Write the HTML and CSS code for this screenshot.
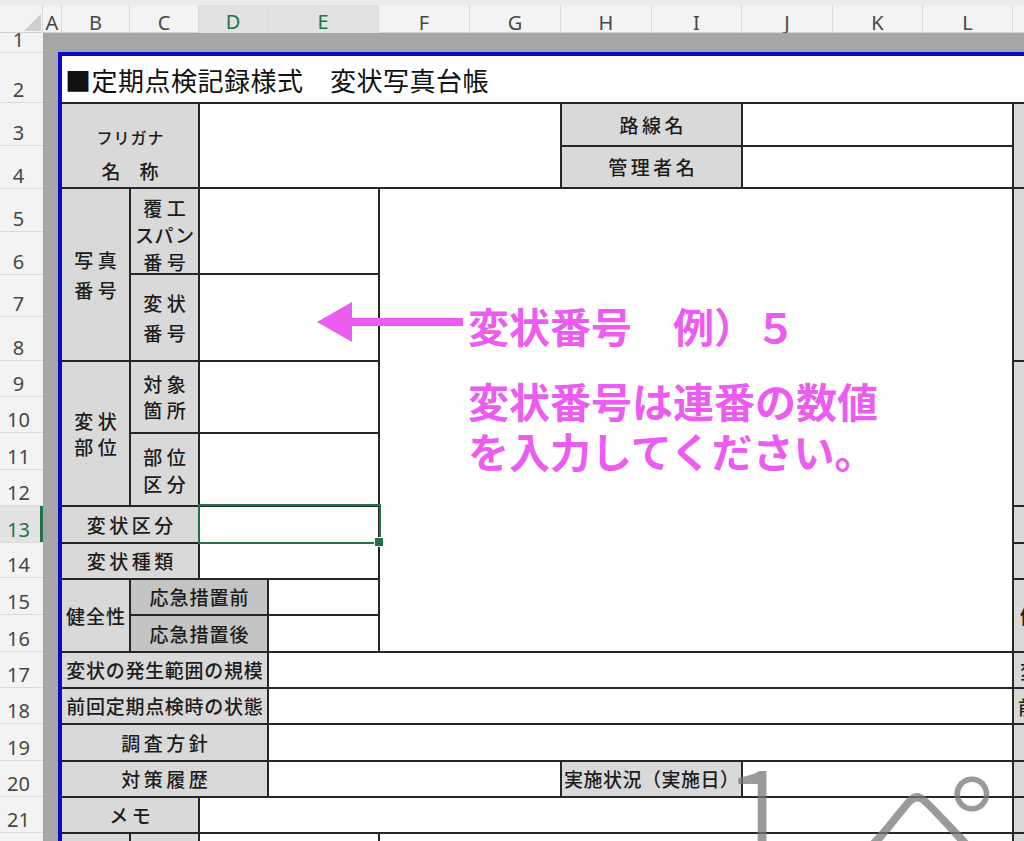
FILE: index.html
```html
<!DOCTYPE html>
<html lang="ja">
<head>
<meta charset="utf-8">
<title>変状写真台帳</title>
<link rel="stylesheet" href="styles.css">
</head>
<body>
<div class="app">
  <div class="topstrip"></div>
  <div class="colhdr">
    <div class="corner"><svg width="43" height="28" viewBox="0 0 43 28"><polygon points="41,9 41,26 24,26" fill="#cfcfcf"/></svg></div>
    <div class="ch">A</div>
    <div class="ch">B</div>
    <div class="ch">C</div>
    <div class="ch on">D</div>
    <div class="ch on">E</div>
    <div class="ch">F</div>
    <div class="ch">G</div>
    <div class="ch">H</div>
    <div class="ch">I</div>
    <div class="ch">J</div>
    <div class="ch">K</div>
    <div class="ch">L</div>
    <div class="ch last"></div>
  </div>
  <div class="main">
    <div class="rowhdr">
      <div class="rh h20">1</div>
      <div class="rh h50">2</div>
      <div class="rh h43">3</div>
      <div class="rh h43">4</div>
      <div class="rh h43">5</div>
      <div class="rh h43">6</div>
      <div class="rh h42">7</div>
      <div class="rh h44">8</div>
      <div class="rh h36">9</div>
      <div class="rh h36">10</div>
      <div class="rh h37">11</div>
      <div class="rh h36">12</div>
      <div class="rh h37 on">13</div>
      <div class="rh h35">14</div>
      <div class="rh h37">15</div>
      <div class="rh h37">16</div>
      <div class="rh h36">17</div>
      <div class="rh h36">18</div>
      <div class="rh h37">19</div>
      <div class="rh h36">20</div>
      <div class="rh h36">21</div>
      <div class="rh h36">22</div>
    </div>
    <div class="sheet">
      <div class="band"></div>
      <div class="print">
        <div class="tbl">
          <div class="title cAll r2">■定期点検記録様式　変状写真台帳</div>

          <div class="lb cBC r3_4 furi"><span class="kana">フリガナ</span><span>名　称</span></div>
          <div class="wh cDG r3_4"></div>
          <div class="lb cHI r3 s3"><span>路線名</span></div>
          <div class="lb cHI r4 s3"><span>管理者名</span></div>
          <div class="wh cJL r3"></div>
          <div class="wh cJL r4"></div>
          <div class="mg cM r3_4"></div>

          <div class="lb cB r5_8 s4 lh30"><span>写真</span><span>番号</span></div>
          <div class="lb cC r5_6 s4 lh27 down"><span>覆工</span><span class="s0">スパン</span><span>番号</span></div>
          <div class="wh cDE r5_6"></div>
          <div class="lb cC r7_8 s4 lh30"><span>変状</span><span>番号</span></div>
          <div class="wh cDE r7_8"></div>
          <div class="wh cFL r5_16"></div>
          <div class="mg cM r5_8"></div>

          <div class="lb cB r9_12 s4"><span>変状</span><span>部位</span></div>
          <div class="lb cC r9_10 s4"><span>対象</span><span>箇所</span></div>
          <div class="wh cDE r9_10"></div>
          <div class="lb cC r11_12 s4 lh27"><span>部位</span><span>区分</span></div>
          <div class="wh cDE r11_12"></div>
          <div class="mg cM r9_12"></div>

          <div class="lb cBC r13 s3"><span>変状区分</span></div>
          <div class="wh cDE r13 sel"></div>
          <div class="mg cM r13"></div>

          <div class="lb cBC r14 s3"><span>変状種類</span></div>
          <div class="wh cDE r14"></div>
          <div class="mg cM r14"></div>

          <div class="lb cB r15_16 s1"><span>健全性</span></div>
          <div class="lb dk cCD r15 s1"><span>応急措置前</span></div>
          <div class="wh cE r15"></div>
          <div class="lb dk cCD r16 s1"><span>応急措置後</span></div>
          <div class="wh cE r16"></div>
          <div class="mg cM r15_16 clip"><span>健全性</span></div>

          <div class="lb cBD r17 s07"><span>変状の発生範囲の規模</span></div>
          <div class="wh cEL r17"></div>
          <div class="mg cM r17 clip"><span>変状の発生範囲の規模</span></div>

          <div class="lb cBD r18 s07"><span>前回定期点検時の状態</span></div>
          <div class="wh cEL r18"></div>
          <div class="mg cM r18 clip tight"><span>前回定期点検時の状態</span></div>

          <div class="lb cBD r19 s3"><span>調査方針</span></div>
          <div class="wh cEL r19"></div>
          <div class="mg cM r19"></div>

          <div class="lb cBD r20 s3"><span>対策履歴</span></div>
          <div class="wh cEG r20"></div>
          <div class="lb cHI r20 s05"><span>実施状況（実施日）</span></div>
          <div class="wh cJL r20"></div>
          <div class="mg cM r20"></div>

          <div class="lb cBC r21 s3"><span>メモ</span></div>
          <div class="wh cDL r21"></div>
          <div class="mg cM r21"></div>

          <div class="lb cB r22"></div>
          <div class="lb cC r22"></div>
          <div class="wh cDE r22"></div>
          <div class="wh cFL r22"></div>
          <div class="mg cM r22"></div>
        </div>
      </div>
    </div>
  </div>

  <svg class="arrow" width="160" height="60" viewBox="0 0 160 60">
    <polygon points="7,28 42,8 42,48" fill="#ec5cf1"/>
    <rect x="40" y="24" width="113" height="8" fill="#ec5cf1"/>
  </svg>
  <div class="note">
    <div class="l1">変状番号　例）５</div>
    <div class="l2">変状番号は連番の数値</div>
    <div>を入力してください。</div>
  </div>

  <div class="wm one">1</div>
  <div class="wm pe">ペ</div>
</div>
</body>
</html>
```
FILE: styles.css
```css
* { box-sizing: border-box; margin: 0; padding: 0; }
body { margin: 0; background: #fff; font-family: "Noto Sans CJK JP", "Noto Sans", sans-serif; }

.app { position: relative; width: 1024px; height: 841px; overflow: hidden; background: #fff; }
.topstrip { height: 5px; background: #e9ebee; }

.colhdr {
  display: grid;
  grid-template-columns: 43px 19px 68px 69px 69px 111px 91px 91px 91px 90px 91px 90px 90px 1fr;
  height: 28px;
  background: #f3f3f3;
  border-bottom: 1px solid #d2d2d2;
}
.corner { border-right: 1px solid #dadada; }
.corner svg { display: block; }
.ch {
  border-right: 1px solid #dadada;
  display: flex; justify-content: center; align-items: center;
  padding-top: 3px;
  font: 20px "Noto Sans", "Liberation Sans", sans-serif;
  color: #474747;
}
.ch.last { border-right: none; }
.ch.on { background: #e2e2e2; color: #217346; border-bottom: 2px solid #217346; }

.main { display: flex; height: 808px; }
.rowhdr { width: 43px; flex: none; background: #f3f3f3; }
.rh {
  display: flex; align-items: flex-end; justify-content: center;
  padding-right: 6px;
  border-bottom: 1px solid #dadada;
  font: 20px/24px "Noto Sans", "Liberation Sans", sans-serif;
  color: #474747;
}
.rh.on { background: #e2e2e2; color: #217346; box-shadow: inset -3px 0 0 #217346; }
.h20 { height: 20px; }
.h35 { height: 35px; }
.h36 { height: 36px; }
.h37 { height: 37px; }
.h42 { height: 42px; }
.h43 { height: 43px; }
.h44 { height: 44px; }
.h50 { height: 50px; }

.sheet { flex: 1; background: #a6a6a6; overflow: hidden; }
.band { height: 19px; }
.print { margin-left: 15px; border-top: 4px solid #0a0acb; border-left: 4px solid #0a0acb; }

.tbl {
  display: grid;
  grid-template-columns: 67px 67px 67px 109px 89px 89px 89px 88px 89px 88px 88px 120px;
  grid-template-rows: 46px 41px 40px 41px 41px 41px 42px 34px 34px 34px 35px 35px 34px 34px 35px 34px 34px 35px 34px 34px 36px;
  gap: 2px;
  background: #262626;
}

.title {
  background: #fff;
  display: flex; align-items: center;
  padding-left: 3px;
  font-size: 26px; letter-spacing: 0.5px;
  color: #111;
}

.lb {
  background: #d9d9d9;
  display: flex; flex-direction: column; align-items: center; justify-content: center;
  font-size: 19px; line-height: 26px; font-weight: 500;
  color: #1c1c1c; white-space: nowrap; text-align: center;
}
.lb.dk { background: #c4c4c4; }
.wh { background: #fff; }
.mg { background: #d9d9d9; }

.s0 { letter-spacing: 0; margin-left: 0; }
.s05 span { letter-spacing: 0.5px; padding-left: 0.5px; }
.s07 span { letter-spacing: 0.7px; padding-left: 0.7px; }
.s1 span { letter-spacing: 1px; padding-left: 1px; }
.s3 span { letter-spacing: 3.5px; padding-left: 3.5px; }
.s4 span { letter-spacing: 4.5px; padding-left: 4.5px; }
.s4 span.s0 { letter-spacing: 0.5px; padding-left: 0.5px; }
.lh27 { line-height: 27px; }
.lh30 { line-height: 30px; }
.down { padding-top: 6px; }

.furi { line-height: 33px; padding-top: 17px; }
.furi .kana { font-size: 16px; letter-spacing: 1px; padding-left: 1px; }

.clip {
  display: flex; align-items: center;
  padding-left: 6px; overflow: hidden; white-space: nowrap;
  font-size: 19px; font-weight: 500; color: #1c1c1c; letter-spacing: 0.7px;
}
.clip.tight { padding-left: 4px; }

.sel { position: relative; z-index: 2; }
.sel::after {
  content: ""; position: absolute;
  top: -3px; left: -2px; right: -3px; bottom: -2px;
  border: 2px solid #217346;
}
.sel::before {
  content: ""; position: absolute; z-index: 3;
  right: -6px; bottom: -5px; width: 8px; height: 8px;
  background: #217346; border: 1px solid #fff;
}

/* grid placement */
.cAll { grid-column: 1 / 13; }
.cB { grid-column: 1; }
.cC { grid-column: 2; }
.cBC { grid-column: 1 / 3; }
.cBD { grid-column: 1 / 4; }
.cCD { grid-column: 2 / 4; }
.cDE { grid-column: 3 / 5; }
.cDG { grid-column: 3 / 7; }
.cDL { grid-column: 3 / 12; }
.cE { grid-column: 4; }
.cEG { grid-column: 4 / 7; }
.cEL { grid-column: 4 / 12; }
.cFL { grid-column: 5 / 12; }
.cHI { grid-column: 7 / 9; }
.cJL { grid-column: 9 / 12; }
.cM { grid-column: 12; }

.r2 { grid-row: 1; }
.r3 { grid-row: 2; }
.r4 { grid-row: 3; }
.r3_4 { grid-row: 2 / 4; }
.r5_6 { grid-row: 4 / 6; }
.r5_8 { grid-row: 4 / 8; }
.r5_16 { grid-row: 4 / 16; }
.r7_8 { grid-row: 6 / 8; }
.r9_10 { grid-row: 8 / 10; }
.r9_12 { grid-row: 8 / 12; }
.r11_12 { grid-row: 10 / 12; }
.r13 { grid-row: 12; }
.r14 { grid-row: 13; }
.r15 { grid-row: 14; }
.r16 { grid-row: 15; }
.r15_16 { grid-row: 14 / 16; }
.r17 { grid-row: 16; }
.r18 { grid-row: 17; }
.r19 { grid-row: 18; }
.r20 { grid-row: 19; }
.r21 { grid-row: 20; }
.r22 { grid-row: 21; }

/* annotation overlay */
.arrow { position: absolute; left: 310px; top: 294px; z-index: 5; }
.note {
  position: absolute; left: 468px; top: 302px; z-index: 5;
  font-size: 41px; line-height: 46px; font-weight: 700;
  color: #ec5cf1; white-space: nowrap;
}
.note .l1 { margin-bottom: 29px; }
.note .l2 { margin-bottom: 4px; }

/* page watermark */
.wm {
  position: absolute; z-index: 4;
  font-family: "Noto Sans CJK JP", sans-serif;
  font-size: 150px; line-height: 150px; font-weight: 300;
  color: rgba(120, 120, 120, 0.75);
}
.wm.one { left: 719px; top: 740px; }
.wm.pe { left: 856px; top: 743px; }
```
